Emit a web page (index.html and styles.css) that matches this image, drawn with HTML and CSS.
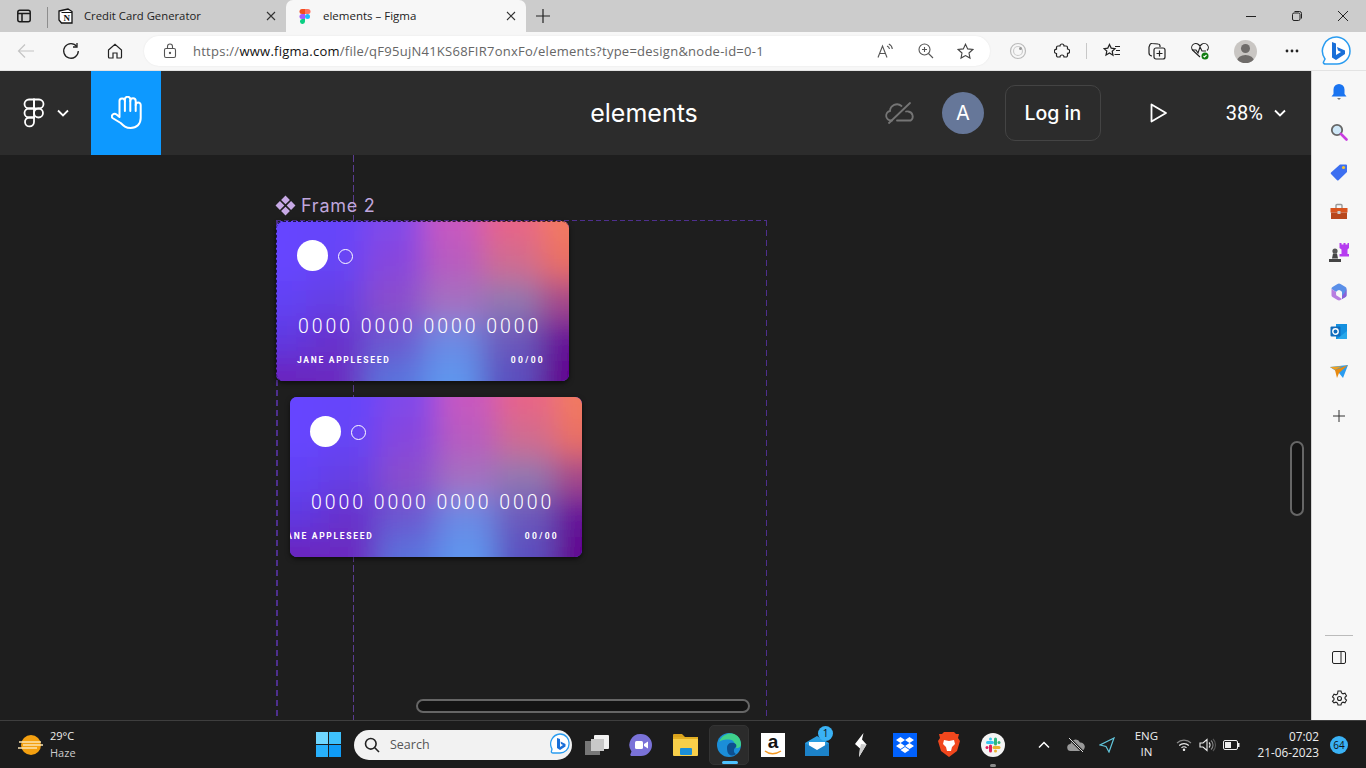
FILE: index.html
```html
<!DOCTYPE html>
<html lang="en">
<head>
<meta charset="utf-8">
<title>elements – Figma</title>
<link rel="stylesheet" href="styles.css">
</head>
<body>
<div class="tabbar">
  <div class="tab-lead">
    <svg width="16" height="16" viewBox="0 0 16 16" fill="none" stroke="#1a1a1a" stroke-width="1.5"><rect x="1.8" y="2.2" width="12.4" height="11.6" rx="2"/><path d="M2 5.5h12M6 5.5v8"/></svg>
  </div>
  <div class="tab">
    <svg class="tab-ico" width="16" height="16" viewBox="0 0 16 16"><path d="M1 3l9-2 4 2.500V15H3.500L1 12z" fill="#fff" stroke="#111" stroke-width="1.300"/><path d="M3.500 4.500H14" stroke="#111" stroke-width="1"/><text x="8.700" y="13" class="notion-n">N</text></svg>
    <span class="tab-title tab-title-tight">Credit Card Generator</span>
    <svg class="tab-x" width="10" height="10" viewBox="0 0 10 10" stroke="#333" stroke-width="1.100"><path d="M1 1l8 8M9 1L1 9"/></svg>
  </div>
  <div class="tab tab-active">
    <svg class="tab-ico" width="16" height="16" viewBox="0 0 16 16"><path d="M5 1h3v5H5a2.500 2.500 0 010-5z" fill="#f24e1e"/><path d="M8 1h3a2.500 2.500 0 010 5H8z" fill="#ff7262"/><path d="M5 6h3v5H5a2.500 2.500 0 010-5z" fill="#a259ff"/><circle cx="10.500" cy="8.500" r="2.500" fill="#1abcfe"/><path d="M5 11h3v2.500A2.500 2.500 0 115 11z" fill="#0acf83"/></svg>
    <span class="tab-title">elements – Figma</span>
    <svg class="tab-x" width="10" height="10" viewBox="0 0 10 10" stroke="#333" stroke-width="1.100"><path d="M1 1l8 8M9 1L1 9"/></svg>
  </div>
  <div class="tab-new"><svg width="14" height="14" viewBox="0 0 14 14" stroke="#222" stroke-width="1.200"><path d="M7 0v14M0 7h14"/></svg></div>
  <div class="win-controls">
    <svg width="12" height="12" viewBox="0 0 12 12" stroke="#222"><path d="M1 6.500h10"/></svg>
    <svg width="12" height="12" viewBox="0 0 12 12" fill="none" stroke="#222"><rect x="1.500" y="3" width="7.500" height="7.500" rx="1.500"/><path d="M3.500 1.500h5a2 2 0 012 2v5"/></svg>
    <svg width="12" height="12" viewBox="0 0 12 12" stroke="#222"><path d="M1 1l10 10M11 1L1 11"/></svg>
  </div>
</div>

<div class="toolbar">
  <div class="nav-group">
    <svg width="18" height="18" viewBox="0 0 18 18" fill="none" stroke="#c4c4c4" stroke-width="1.200"><path d="M17 9H1.500M8 2.500L1.500 9 8 15.500"/></svg>
    <svg width="18" height="18" viewBox="0 0 18 18" fill="none" stroke="#222" stroke-width="1.300"><path d="M14.800 4.500A7.300 7.300 0 1016.300 9"/><path d="M15 1v4h-4"/></svg>
    <svg width="16" height="16" viewBox="0 0 16 16" fill="none" stroke="#222" stroke-width="1.200"><path d="M1.500 7L8 1.200 14.500 7v7a1 1 0 01-1 1H10v-5H6v5H2.500a1 1 0 01-1-1z"/></svg>
  </div>
  <div class="omnibox">
    <svg class="lock" width="14" height="16" viewBox="0 0 14 16" fill="none" stroke="#555" stroke-width="1.100"><rect x="1.500" y="5.500" width="11" height="9" rx="1.500"/><path d="M4.500 5.500V3.500a2.500 2.500 0 015 0v2"/><circle cx="7" cy="10" r=".6" fill="#555"/></svg>
    <div class="url">https://<b>www.figma.com</b>/file/qF95ujN41KS68FIR7onxFo/elements?type=design&amp;node-id=0-1</div>
    <div class="omni-tools">
      <svg width="18" height="16" viewBox="0 0 18 16" fill="none" stroke="#555" stroke-width="1.100"><path d="M1 14.500L5.500 3l4.500 11.500M2.700 10.500h5.600"/><path d="M10 3a4 4 0 012.500 3M11.800 1a6 6 0 013.500 5"/></svg>
      <svg width="16" height="16" viewBox="0 0 16 16" fill="none" stroke="#555" stroke-width="1.100"><circle cx="6.500" cy="6.500" r="5.500"/><path d="M10.500 10.500L15 15M4 6.500h5M6.500 4v5"/></svg>
      <svg width="17" height="17" viewBox="0 0 17 17" fill="none" stroke="#444" stroke-width="1.100"><path d="M8.500 1.200l2.200 4.700 5.100.6-3.800 3.500 1 5.100-4.500-2.500L4 15.100l1-5.100L1.200 6.500l5.100-.6z"/></svg>
    </div>
  </div>
  <div class="tool-group">
    <span class="slot slot-a"><svg width="18" height="18" viewBox="0 0 18 18" fill="none" stroke="#bbb" stroke-width="1.200"><circle cx="9" cy="9" r="7.500"/><circle cx="9" cy="9" r="4.500" stroke="#ccc"/><circle cx="11.500" cy="6.500" r="1.500" fill="#999" stroke="none"/></svg></span>
    <span class="slot"><svg width="16" height="16" viewBox="0 0 16 16" fill="none" stroke="#222" stroke-width="1.200"><path d="M6 3a2 2 0 114 0h2a1.500 1.500 0 011.500 1.500V6a2.200 2.200 0 110 4.400v2.100A1.500 1.500 0 0112 14h-2a2 2 0 10-4 0H4a1.500 1.500 0 01-1.500-1.500v-2a2.200 2.200 0 110-4.400V4.500A1.500 1.500 0 014 3z"/></svg></span>
    <span class="tool-sep"></span>
    <span class="slot slot-fav"><svg width="18" height="16" viewBox="0 0 18 16" fill="none" stroke="#222" stroke-width="1.200"><path d="M6.500 1.500l1.700 3.600 3.800.5-2.800 2.600.8 4L6.500 10 3 12l.8-4L1 5.600l3.800-.5z"/><path d="M12 3.500h5M13 7.500h4M11.500 11.500h5.500"/></svg></span>
    <span class="slot slot-coll"><svg width="18" height="18" viewBox="0 0 18 18" fill="none" stroke="#222" stroke-width="1.200"><rect x="6" y="6" width="11" height="11" rx="2"/><path d="M11.500 8.500v6M8.500 11.500h6"/><path d="M4 14a3 3 0 01-3-3V5l1-2.500A2 2 0 014 1.500l6 .5a2 2 0 012 2v1"/></svg></span>
    <span class="slot slot-health"><svg width="18" height="18" viewBox="0 0 18 18" fill="none" stroke="#222" stroke-width="1.100"><path d="M9 15L2 8.500a4 4 0 015.500-6L9 4l1.500-1.500a4 4 0 015.500 6"/><path d="M1 8h4l2 3 2-6 2 4h4"/><circle cx="14" cy="14" r="3.500" fill="#107c10" stroke="none"/><path d="M12.500 14l1 1 2-2" stroke="#fff"/></svg></span>
    <span class="slot slot-wide"><span class="profile"><span class="profile-head"></span><span class="profile-body"></span></span></span>
    <span class="slot slot-dots"><svg width="14" height="4" viewBox="0 0 14 4" fill="#222"><circle cx="2" cy="2" r="1.400"/><circle cx="7" cy="2" r="1.400"/><circle cx="12" cy="2" r="1.400"/></svg></span>
  </div>
  <div class="bing-wrap">
    <svg width="32" height="32" viewBox="0 0 32 32"><path d="M16 2a14 14 0 0113 14c0 7.500-6 13-13 13H4.500c-1.500 0-2.500-1-2-2l1.500-3A14 14 0 0116 2z" fill="#fff" stroke="#2a9cf0" stroke-width="1.500"/><path d="M11 7l4 1.500V20l5-3-3-1.500-1-3.500 8 3.500v3.500L15 25l-4-2.500z" fill="#1a6fd8"/></svg>
  </div>
</div>

<div class="workspace">
  <div class="figma">
    <header class="fig-head">
      <div class="fig-logo">
        <svg width="22" height="30" viewBox="0 0 22 30" fill="none" stroke="#fff" stroke-width="1.800"><path d="M6 1.500h5v9H6a4.500 4.500 0 010-9z"/><path d="M11 1.500h5a4.500 4.500 0 010 9h-5z"/><path d="M6 10.500h5v9H6a4.500 4.500 0 010-9z"/><circle cx="15.500" cy="15" r="4.500"/><path d="M6 19.500h5V24a4.500 4.500 0 11-5-4.500z"/></svg>
        <svg width="12" height="8" viewBox="0 0 12 8" fill="none" stroke="#fff" stroke-width="1.800"><path d="M1 1.500l5 5 5-5"/></svg>
      </div>
      <div class="fig-hand">
        <svg width="31" height="34" viewBox="0 0 31 34" fill="none" stroke="#fff" stroke-width="2" stroke-linecap="round" stroke-linejoin="round"><path d="M8.500 21V5.500a2.700 2.700 0 015.400-.5V3.500a2.700 2.700 0 015.400 0V5a2.700 2.700 0 015.400 0V9a2.500 2.500 0 015 0V22c0 6-4 10-10 10-5 0-7-2-10-5L1.500 22c-2-2.500 1.500-5.500 4-3.500L8.500 21z"/><path d="M13.900 5v10M19.300 5v10M24.700 9v6"/></svg>
      </div>
      <div class="fig-title">elements</div>
      <div class="fig-right">
        <svg class="fig-cloud" width="30" height="22" viewBox="0 0 30 22" fill="none" stroke="#757575" stroke-width="1.800" stroke-linecap="round"><path d="M7 18.500H6A4.800 4.800 0 015 9a7 7 0 0111.500-5"/><path d="M21 9.500c.8-.3 1.500-.3 2.200 0a5 5 0 012.500 9H12"/><path d="M4 21L25 1"/></svg>
        <div class="fig-avatar">A</div>
        <div class="fig-login">Log in</div>
        <svg class="fig-play" width="18" height="20" viewBox="0 0 18 20" fill="none" stroke="#fff" stroke-width="1.800" stroke-linejoin="round"><path d="M1.500 1.500L16 10 1.500 18.500z"/></svg>
        <div class="fig-zoom">38%</div>
        <svg class="fig-chev" width="12" height="8" viewBox="0 0 12 8" fill="none" stroke="#fff" stroke-width="1.800"><path d="M1 1.500l5 5 5-5"/></svg>
      </div>
    </header>
    <main class="canvas">
      <div class="guide"></div>
      <div class="frame-label">
        <svg width="21" height="21" viewBox="0 0 20 20" fill="#c7a9e6"><path d="M10 .5l4.200 4.200L10 8.900 5.800 4.700zM15.300 5.800L19.500 10l-4.200 4.200L11.100 10zM4.700 5.800L8.900 10l-4.200 4.200L.5 10zM10 11.100l4.200 4.200L10 19.500l-4.200-4.200z"/></svg>
        <span>Frame 2</span>
      </div>
      <div class="frame"></div>
      <section class="card card-one">
        <svg class="card-bg" viewBox="0 0 293 160" preserveAspectRatio="none">
          <defs><filter id="meshblur" filterUnits="userSpaceOnUse" x="-120" y="-120" width="533" height="400"><feGaussianBlur stdDeviation="15"/></filter></defs>
          <g id="mesh" filter="url(#meshblur)">
            <rect x="-90" y="-90" width="120" height="110" fill="#6644ff"/><rect x="30" y="-90" width="58" height="110" fill="#6644fb"/><rect x="88" y="-90" width="59" height="110" fill="#8048ea"/><rect x="147" y="-90" width="59" height="110" fill="#c858c0"/><rect x="206" y="-90" width="58" height="110" fill="#e86488"/><rect x="264" y="-90" width="120" height="110" fill="#f27a60"/>
            <rect x="-90" y="20" width="120" height="40" fill="#6644ff"/><rect x="30" y="20" width="58" height="40" fill="#6644f6"/><rect x="88" y="20" width="59" height="40" fill="#8646de"/><rect x="147" y="20" width="59" height="40" fill="#b85cc0"/><rect x="206" y="20" width="58" height="40" fill="#d06c90"/><rect x="264" y="20" width="120" height="40" fill="#ea7064"/>
            <rect x="-90" y="60" width="120" height="40" fill="#6242f4"/><rect x="30" y="60" width="58" height="40" fill="#6640e4"/><rect x="88" y="60" width="59" height="40" fill="#8a4ecc"/><rect x="147" y="60" width="59" height="40" fill="#a470c0"/><rect x="206" y="60" width="58" height="40" fill="#9078b0"/><rect x="264" y="60" width="120" height="40" fill="#a44688"/>
            <rect x="-90" y="100" width="120" height="40" fill="#6038e0"/><rect x="30" y="100" width="58" height="40" fill="#6832cc"/><rect x="88" y="100" width="59" height="40" fill="#6a58d0"/><rect x="147" y="100" width="59" height="40" fill="#6a8ae4"/><rect x="206" y="100" width="58" height="40" fill="#6a58bc"/><rect x="264" y="100" width="120" height="40" fill="#640c98"/>
            <rect x="-90" y="140" width="120" height="110" fill="#6a22bc"/><rect x="30" y="140" width="58" height="110" fill="#6a2cc0"/><rect x="88" y="140" width="59" height="110" fill="#5a72dc"/><rect x="147" y="140" width="59" height="110" fill="#5f96ee"/><rect x="206" y="140" width="58" height="110" fill="#5a50c0"/><rect x="264" y="140" width="120" height="110" fill="#62008e"/>
          </g>
        </svg>
        <div class="card-chips"><span class="chip-big"></span><span class="chip-small"></span></div>
        <div class="card-number">0000 0000 0000 0000</div>
        <div class="card-foot"><span>JANE APPLESEED</span><span class="card-date">00/00</span></div>
      </section>
      <section class="card card-two">
        <svg class="card-bg" viewBox="0 0 293 160" preserveAspectRatio="none"><use href="#mesh"/></svg>
        <div class="card-chips"><span class="chip-big"></span><span class="chip-small"></span></div>
        <div class="card-number">0000 0000 0000 0000</div>
        <div class="card-foot"><span class="name-cut">JANE APPLESEED</span><span class="card-date">00/00</span></div>
      </section>
      <div class="scroll-v"></div>
      <div class="scroll-h"></div>
    </main>
  </div>
  <aside class="sidebar">
    <span class="side-slot"><svg width="18" height="18" viewBox="0 0 18 18"><path d="M9 1a5.500 5.500 0 015.500 5.500V11l2 2.500h-15l2-2.500V6.500A5.500 5.500 0 019 1z" fill="#1a74f0"/><path d="M7 15h4l-2 2z" fill="#777"/></svg></span>
    <span class="side-slot"><svg width="18" height="18" viewBox="0 0 18 18"><circle cx="7" cy="7" r="5.200" fill="#cfe8f8" stroke="#666" stroke-width="1.800"/><path d="M11 11l5.500 5.500" stroke="#c83de0" stroke-width="2.600" stroke-linecap="round"/></svg></span>
    <span class="side-slot"><svg width="18" height="18" viewBox="0 0 18 18"><path d="M10 1.500h6a1 1 0 011 1v6.500L8.500 17.200a1 1 0 01-1.400 0L1 11a1 1 0 010-1.400z" fill="#3d6ff0"/><circle cx="13.500" cy="4.500" r="1.600" fill="#f4c430"/></svg></span>
    <span class="side-slot"><svg width="18" height="18" viewBox="0 0 18 18"><path d="M6 5V2.500A1 1 0 017 1.500h4a1 1 0 011 1V5" fill="none" stroke="#999" stroke-width="1.400"/><rect x="0.500" y="5" width="17" height="4.500" fill="#d9541e"/><rect x="1" y="9.500" width="16" height="6.500" fill="#b8471c"/><rect x="7.500" y="8" width="3" height="3" fill="#ccc"/></svg></span>
    <span class="side-slot"><svg width="20" height="19" viewBox="0 0 20 19"><path d="M10.500 0h2v1.500h2V0h2v1.500h2V0h1.500v5l-1.500 1.500V11H20v2.500h-9.500V11h2V6.500L10.500 5z" fill="#b63cf0"/><circle cx="6" cy="8" r="2.600" fill="#555"/><path d="M4 10.500h4l1 5H3zM0 16h12v3H0z" fill="#444"/></svg></span>
    <span class="side-slot"><svg width="18" height="18" viewBox="0 0 18 18"><path d="M9 .5a3 3 0 011.500.4L15.500 4a2 2 0 011 1.700v6.600a2 2 0 01-1 1.700L12 16V9L9 7.300 6.200 9 1.500 6V5.700A2 2 0 012.500 4L7.500.9A3 3 0 019 .5z" fill="#5a8fe8"/><path d="M1.500 6l4.700 3v3.300L9 14l3 2-1.500 1.100a3 3 0 01-3 0L2.500 14a2 2 0 01-1-1.700z" fill="#b87de0"/><path d="M16.500 5.700v6.600a2 2 0 01-1 1.700L12 16v-3l3-3.500z" fill="#8a5fd8"/><circle cx="9" cy="10" r="2.800" fill="#f7f7f7"/></svg></span>
    <span class="side-slot"><svg width="18" height="18" viewBox="0 0 18 18"><path d="M6 1h11v14a1 1 0 01-1 1H6z" fill="#1490df"/><path d="M17 8v7a1 1 0 01-1 1H7z" fill="#28a8ea"/><rect x="0.500" y="3.500" width="10" height="10" rx="1" fill="#0f6cbd"/><circle cx="5.500" cy="8.500" r="2.700" fill="none" stroke="#fff" stroke-width="1.400"/></svg></span>
    <span class="side-slot"><svg width="18" height="14" viewBox="0 0 18 14"><path d="M0 2l18-2-5 13-4-5z" fill="#2a9cf0"/><path d="M0 2l12-.8L5 5z" fill="#f0a020"/><path d="M5 5l13-5-9 8-2 5z" fill="#e88a10"/></svg></span>
    <span class="side-plus"><svg width="12" height="12" viewBox="0 0 12 12" stroke="#333"><path d="M6 0v12M0 6h12"/></svg></span>
    <span class="side-rule"></span>
    <span class="side-slot side-panel"><svg width="14" height="13" viewBox="0 0 14 13" fill="none" stroke="#222"><rect x=".5" y=".5" width="13" height="12" rx="1.500"/><path d="M9 .5v12"/></svg></span>
    <span class="side-slot"><svg width="17" height="17" viewBox="0 0 17 17" fill="none" stroke="#222" stroke-width="1.100"><path d="M7 1h3l.5 2 1.500.8 2-.6 1.500 2.600-1.500 1.500v1.400l1.500 1.500-1.500 2.600-2-.6-1.500.8-.5 2H7l-.5-2-1.500-.8-2 .6L1.500 11.200 3 9.700V8.300L1.500 6.800 3 4.200l2 .6 1.500-.8z"/><circle cx="8.500" cy="8.500" r="2"/></svg></span>
  </aside>
</div>

<footer class="taskbar">
  <div class="weather">
    <svg width="26" height="24" viewBox="0 0 26 24"><circle cx="13" cy="12" r="10" fill="#f4a010"/><path d="M1 9h22M5 12h20M0 15h19" stroke="#fbe3b0" stroke-width="1.500"/></svg>
    <div class="weather-text"><span>29°C</span><span class="weather-sub">Haze</span></div>
  </div>
  <div class="start">
    <svg width="25" height="25" viewBox="0 0 25 25"><rect width="12" height="12" fill="#6fd6ff"/><rect x="13" width="12" height="12" fill="#3ec0fb"/><rect y="13" width="12" height="12" fill="#28b0fb"/><rect x="13" y="13" width="12" height="12" fill="#0f9bf6"/></svg>
  </div>
  <div class="search">
    <svg width="16" height="16" viewBox="0 0 16 16" fill="none" stroke="#222" stroke-width="1.600"><circle cx="6.800" cy="6.800" r="5.300"/><path d="M10.800 10.800L15 15"/></svg>
    <span>Search</span>
    <svg class="search-bing" width="20" height="24" viewBox="0 0 20 24"><path d="M10 1a9 9 0 019 10c0 5-4 9-9 9H3c-1 0-2-.5-1.500-2l.5-2A10 10 0 0110 1z" fill="#fff" stroke="#2a9cf0" stroke-width="1.300"/><path d="M7 5l3 1v8l3-2-2-1-.5-2.500 5 2.500v2.500L10 17l-3-2z" fill="#1a6fd8"/></svg>
  </div>
  <div class="task-icons">
    <span class="task"><svg width="26" height="22" viewBox="0 0 26 22"><rect x="1" y="7" width="15" height="14" fill="#777"/><rect x="10" y="1" width="15" height="14" rx="1" fill="#f2f2f2"/><rect x="7" y="5" width="13" height="12" fill="#c8c8c8"/></svg></span>
    <span class="task"><svg width="24" height="24" viewBox="0 0 24 24"><path d="M12 1a11 11 0 110 22H3c-1.500 0-2-1-1.500-2l1-2.500A11 11 0 0112 1z" fill="#7a72d8"/><rect x="6" y="8" width="8" height="8" rx="1.500" fill="#fff"/><path d="M15 11l4-2.500v7L15 13z" fill="#fff"/></svg></span>
    <span class="task"><svg width="25" height="24" viewBox="0 0 25 24"><path d="M0 2a1 1 0 011-1h8l3 3h-12z" fill="#d9a21c"/><rect y="4" width="25" height="19" rx="1" fill="#f8cf4a"/><rect y="4" width="25" height="2" fill="#e2ae22"/><rect x="7" y="15" width="12" height="7" rx="1" fill="#1b8fd8"/></svg></span>
    <span class="task task-active"><svg width="24" height="24" viewBox="0 0 24 24"><circle cx="12" cy="12" r="12" fill="#1b8ed8"/><path d="M2 9C5 1 12 0 15 .5c6 1 9 6 9 11 0 3-3 4-6 3 1-3-1-8-6-8C8 6.500 4 7 2 9z" fill="#3fd18c"/><path d="M10 15c0-4 3-6 7-5 3 1 3 4 1 5-2 2-1 5 1 6-4 3-9 2-9-6z" fill="#0d4f8f"/></svg><i></i></span>
    <span class="task"><span class="amazon">a<svg width="18" height="6" viewBox="0 0 18 6" fill="none" stroke="#f59a23" stroke-width="1.500"><path d="M1 1c4 3.500 11 3.500 16 0"/></svg></span></span>
    <span class="task task-mail"><svg width="24" height="20" viewBox="0 0 24 20"><path d="M0 7l12-7 12 7v12a1 1 0 01-1 1H1a1 1 0 01-1-1z" fill="#2a9de0"/><path d="M4 6h16v5l-8 4-8-4z" fill="#fff"/><path d="M0 7l12 7 12-7v13H0z" fill="#1c82c8"/></svg><span class="mail-badge">1</span></span>
    <span class="task"><svg width="14" height="24" viewBox="0 0 14 24"><path d="M9.500 0L8 6.500l4.500 5L5 24l1-8.500L1 11z" fill="#fff"/><path d="M7 11l5.500.5L5 24l1-8.500z" fill="#ccc"/></svg></span>
    <span class="task"><span class="dropbox"><svg width="18" height="16" viewBox="0 0 18 16" fill="#fff"><path d="M4.500 0L9 3 4.500 6 0 3zM13.500 0L18 3l-4.500 3L9 3zM4.500 6L9 9l-4.500 3L0 9zM13.500 6L18 9l-4.500 3L9 9zM4.500 13L9 10l4.500 3L9 16z"/></svg></span></span>
    <span class="task"><svg width="22" height="25" viewBox="0 0 22 25"><path d="M6 0h10l2 2 3 0-1 4 2 3-3 10-8 6-8-6L0 9l2-3-1-4 3 0z" fill="#f1471d"/><path d="M6 8l5 1 5-1 1 4-3 3-1 4h-4l-1-4-3-3z" fill="#fff"/></svg></span>
    <span class="task"><span class="slack"><svg width="16" height="16" viewBox="0 0 16 16" fill="none" stroke-width="3" stroke-linecap="round"><path d="M2.500 5.500h5" stroke="#36c5f0"/><path d="M5.500 2v.1" stroke="#36c5f0"/><path d="M10.500 2v5" stroke="#2eb67d"/><path d="M14 5.500v.1" stroke="#2eb67d"/><path d="M9 10.500h5" stroke="#ecb22e"/><path d="M10.500 14v.1" stroke="#ecb22e"/><path d="M5.500 9v5" stroke="#e01e5a"/><path d="M2 10.500v.1" stroke="#e01e5a"/></svg></span><i class="task-dot"></i></span>
  </div>
  <div class="tray">
    <svg class="tray-chev" width="12" height="8" viewBox="0 0 12 8" fill="none" stroke="#fff" stroke-width="1.500"><path d="M1 6.500l5-5 5 5"/></svg>
    <svg class="tray-cloud" width="18" height="14" viewBox="0 0 18 14"><path d="M4 13a3.500 3.500 0 01-.5-7A5 5 0 0113 4.500 4 4 0 0114 13z" fill="#999"/><path d="M2 0l14 14" stroke="#1c1c1c" stroke-width="2.500"/><path d="M2 0l14 14" stroke="#ddd"/></svg>
    <svg class="tray-nav" width="16" height="16" viewBox="0 0 16 16" fill="none" stroke="#62c6dc" stroke-width="1.200"><path d="M15 1L1 8l6 1.500L10 15z"/></svg>
    <div class="tray-lang"><span>ENG</span><span>IN</span></div>
    <svg class="tray-wifi" width="16" height="12" viewBox="0 0 16 12" fill="none" stroke="#eee" stroke-width="1.100"><path d="M1 4a10 10 0 0114 0" stroke="#888"/><path d="M3.200 6.500a7 7 0 019.600 0"/><path d="M5.500 8.800a3.500 3.500 0 015 0"/><circle cx="8" cy="10.800" r=".7" fill="#eee"/></svg>
    <svg class="tray-vol" width="17" height="14" viewBox="0 0 17 14" fill="none" stroke="#eee" stroke-width="1.100"><path d="M1 5v4h3l4 3.500v-11L4 5z"/><path d="M10 4.500a3.500 3.500 0 010 5"/><path d="M12 2.500a6 6 0 010 9" stroke="#888"/><path d="M14 1a8.500 8.500 0 010 12" stroke="#555"/></svg>
    <svg class="tray-bat" width="17" height="10" viewBox="0 0 17 10"><rect x=".5" y=".5" width="14" height="9" rx="1.500" fill="none" stroke="#eee"/><rect x="2" y="2" width="6" height="6" fill="#eee"/><rect x="15" y="3" width="1.500" height="4" fill="#eee"/></svg>
    <div class="tray-clock"><span>07:02</span><span>21-06-2023</span></div>
    <div class="tray-badge">64</div>
  </div>
</footer>
</body>
</html>
```
FILE: styles.css
```css
* { box-sizing: border-box; }
html, body { margin: 0; padding: 0; }
body { width: 1366px; height: 768px; overflow: hidden; display: flex; flex-direction: column; font-family: "Open Sans", "Noto Sans", sans-serif; background: #1e1e1e; }
svg { display: block; flex: none; }

.tabbar { height: 32px; background: #cccccc; display: flex; align-items: stretch; flex: none; }
.tab-lead { width: 48px; padding-left: 16px; display: flex; align-items: center; position: relative; }
.tab-lead::after { content: ""; position: absolute; left: 47px; top: 7px; height: 21px; width: 1px; background: #8d8d8d; }
.tab { width: 238px; display: flex; align-items: center; padding-left: 10px; font-size: 11.5px; color: #222; }
.tab-active { width: 240px; background: #f7f7f7; border-radius: 7px 7px 0 0; padding-left: 11px; }
.tab-ico { margin-right: 10px; }
.tab-title { flex: 1; white-space: nowrap; margin-top: -2px; }
.tab-title-tight { font-size: 11.3px; }
.tab-x { margin-right: 10px; }
.notion-n { font: bold 9px "Liberation Serif", serif; text-anchor: middle; fill: #111; }
.tab-new { width: 34px; display: flex; align-items: center; justify-content: center; }
.win-controls { margin-left: auto; display: flex; align-items: center; gap: 34px; padding-right: 17px; }

.toolbar { height: 39px; background: #f7f7f7; display: flex; align-items: center; flex: none; border-bottom: 1px solid #e3e3e3; position: relative; }
.nav-group { width: 144px; display: flex; align-items: center; padding-left: 17px; gap: 27px; }
.omnibox { width: 846px; height: 30px; background: #fff; border-radius: 15px; display: flex; align-items: center; padding-left: 19px; box-shadow: 0 0 2px rgba(0,0,0,.08); }
.lock { margin-right: 16px; }
.url { font-size: 13px; color: #666; white-space: nowrap; flex: 1; letter-spacing: .255px; }
.url b { font-weight: 400; color: #111; }
.omni-tools { display: flex; align-items: center; gap: 23px; padding-right: 16px; }
.tool-group { display: flex; align-items: center; }
.slot { width: 44px; display: flex; justify-content: center; align-items: center; }
.slot-a { margin-left: 6px; }
.tool-sep { width: 1px; height: 16px; background: #c8c8c8; margin: 0 2px; }
.slot-fav { width: 46px; }
.slot-coll { width: 43px; }
.slot-health { width: 44px; }
.slot-wide { width: 46px; }
.profile { width: 23px; height: 23px; border-radius: 50%; background: #c9c6c3; position: relative; overflow: hidden; display: block; }
.profile-head { position: absolute; left: 7px; top: 4px; width: 9px; height: 9px; border-radius: 50%; background: #6f6c6a; }
.profile-body { position: absolute; left: 3px; top: 15px; width: 17px; height: 12px; border-radius: 50%; background: #6f6c6a; }
.slot-dots { width: 48px; }
.bing-wrap { margin-left: 5px; }

.workspace { flex: 1; display: flex; min-height: 0; }
.figma { width: 1311px; display: flex; flex-direction: column; font-family: Inter, sans-serif; }
.fig-head { height: 84px; background: #2c2c2c; display: flex; align-items: center; position: relative; color: #fff; flex: none; }
.fig-logo { width: 91px; display: flex; align-items: center; padding-left: 23px; gap: 12px; }
.fig-hand { width: 70px; height: 84px; background: #0d99ff; display: flex; align-items: center; justify-content: center; }
.fig-title { position: absolute; left: 0; width: 1288px; text-align: center; font-size: 25px; }
.fig-right { margin-left: auto; display: flex; align-items: center; padding-right: 25px; position: relative; }
.fig-cloud { margin-right: 27px; }
.fig-avatar { width: 42px; height: 42px; border-radius: 50%; background: #667799; display: flex; align-items: center; justify-content: center; font-size: 20px; margin-right: 21px; }
.fig-login { width: 96px; height: 56px; border: 1px solid #444; border-radius: 10px; display: flex; align-items: center; justify-content: center; font-size: 19.5px; font-weight: 500; margin-right: 49px; }
.fig-play { margin-right: 58px; }
.fig-zoom { font-family: Roboto, sans-serif; font-size: 20px; margin-right: 11px; }

.canvas { flex: 1; position: relative; background: #1e1e1e; overflow: hidden; }
.guide { position: absolute; left: 353px; top: 0; bottom: 0; width: 1px; background: repeating-linear-gradient(to bottom, #5b3c90 0 7px, transparent 7px 10px); }
.frame-label { position: absolute; left: 275px; top: 40px; display: flex; align-items: center; gap: 5px; color: #bfa6dc; font-size: 18px; letter-spacing: .75px; }
.frame { position: absolute; left: 276px; top: 65px; width: 491px; height: 520px;
  background:
    repeating-linear-gradient(to bottom, #4e2f8e 0 6px, transparent 6px 10px) left top / 2px 100% no-repeat,
    repeating-linear-gradient(to bottom, #4e2f8e 0 6px, transparent 6px 10px) right top / 1px 100% no-repeat,
    repeating-linear-gradient(to right, #4e2f8e 0 5px, transparent 5px 8px) left top / 100% 1px no-repeat; }
.card { position: absolute; overflow: hidden; height: 160px; border-radius: 7px; padding: 19px 21px 0; color: #fff; box-shadow: 0 2px 5px rgba(0,0,0,.6); background: #6644ff; }
.card-bg { position: absolute; left: 0; top: 0; width: 100%; height: 100%; }
.card-chips, .card-number, .card-foot { position: relative; }
.card-one { left: 276px; top: 66px; width: 293px; }
.card-one::after { content: ""; position: absolute; inset: 0; border-radius: 7px; border-left: 1.5px dashed rgba(0,0,0,.7); border-top: 1.5px dashed rgba(0,0,0,.7); }
.card-two { left: 290px; top: 242px; width: 292px; padding-left: 20px; padding-right: 20px; }
.card-chips { display: flex; align-items: center; gap: 10px; height: 31px; }
.chip-big { width: 31px; height: 31px; border-radius: 50%; background: #fff; display: block; }
.chip-small { width: 15px; height: 15px; border-radius: 50%; border: 1px solid #fff; display: block; margin-top: 1px; }
.card-number { font-family: Roboto, sans-serif; font-weight: 300; font-size: 19.5px; letter-spacing: 2.950px; margin-top: 45px; line-height: 22px; white-space: nowrap; padding-left: 1px; }
.card-foot { display: flex; justify-content: space-between; font-family: Roboto, sans-serif; font-size: 8.5px; font-weight: 700; letter-spacing: 1.700px; margin-top: 17px; padding-right: 3px; line-height: 10px; white-space: nowrap; }
.card-date { letter-spacing: 2.300px; }
.name-cut { margin-left: -30px; }
.scroll-v { position: absolute; left: 1290px; top: 286px; width: 14px; height: 75px; border: 2px solid #666; border-radius: 7px; background: #141414; }
.scroll-h { position: absolute; left: 416px; top: 544px; width: 334px; height: 14px; border: 2px solid #666; border-radius: 7px; background: #141414; }

.sidebar { width: 55px; background: #f7f7f7; border-left: 1px solid #d4d4d4; display: flex; flex-direction: column; align-items: center; padding: 1px 0 2px; }
.side-slot { height: 40px; width: 100%; display: flex; align-items: center; justify-content: center; flex: none; }
.side-plus { height: 48px; display: flex; align-items: center; justify-content: center; flex: none; }
.side-rule { width: 28px; height: 1px; background: #bbb; margin-top: auto; margin-bottom: 1px; flex: none; }
.side-panel { height: 41px; }

.taskbar { height: 48px; background: #1c1c1c; border-top: 1px solid #3e3e3e; display: flex; align-items: center; color: #eee; flex: none; font-size: 11px; }
.weather { width: 316px; display: flex; align-items: center; padding-left: 18px; gap: 6px; }
.weather-text { display: flex; flex-direction: column; line-height: 17px; margin-top: -2px; }
.weather-sub { color: #ccc; }
.start { width: 38px; }
.search { width: 218px; height: 30px; border-radius: 15px; background: #f2f2f2; display: flex; align-items: center; padding-left: 10px; gap: 10px; color: #555; font-size: 12.500px; position: relative; }
.search-bing { margin-left: auto; margin-right: 2px; }
.task-icons { display: flex; align-items: center; margin-left: 3px; }
.task { width: 44px; height: 44px; display: flex; align-items: center; justify-content: center; position: relative; }
.task-active { background: #2b2b2b; border: 1px solid #333; border-radius: 5px; height: 40px; width: 40px; margin: 0 2px; }
.task-active i { position: absolute; left: 12px; bottom: 0; width: 16px; height: 3px; border-radius: 2px; background: #4cc2ff; }
.task-dot { position: absolute; left: 19px; bottom: 0; width: 6px; height: 3px; border-radius: 2px; background: #8a8a8a; }
.amazon { width: 24px; height: 24px; background: #fff; color: #111; font: 700 19px/17px "Liberation Sans", sans-serif; text-align: center; display: flex; flex-direction: column; align-items: center; }
.task-mail { padding-top: 3px; }
.mail-badge { position: absolute; left: 23px; top: 3px; width: 15px; height: 15px; border-radius: 50%; background: #3ab2f5; color: #111; font-size: 10px; line-height: 15px; text-align: center; }
.dropbox { width: 24px; height: 24px; background: #0061fe; display: flex; align-items: center; justify-content: center; }
.slack { width: 24px; height: 24px; border-radius: 50%; background: #f4f4f4; display: flex; align-items: center; justify-content: center; }
.tray { margin-left: auto; display: flex; align-items: center; padding-right: 19px; font-size: 11.5px; }
.tray-chev { margin-right: 17px; }
.tray-cloud { margin-right: 14px; }
.tray-nav { margin-right: 12px; }
.tray-lang { width: 38px; display: flex; flex-direction: column; align-items: center; line-height: 16px; margin-top: -1px; }
.tray-wifi { margin: 0 7px 0 11px; }
.tray-vol { margin-right: 7px; }
.tray-bat { margin-right: 17px; }
.tray-clock { display: flex; flex-direction: column; align-items: flex-end; line-height: 16px; margin-top: -2px; font-size: 11.8px; }
.tray-badge { width: 18px; height: 18px; margin-left: 11px; border-radius: 50%; background: #3ab2f5; color: #111; font-size: 10px; line-height: 18px; text-align: center; margin-right: -1px; }
```
